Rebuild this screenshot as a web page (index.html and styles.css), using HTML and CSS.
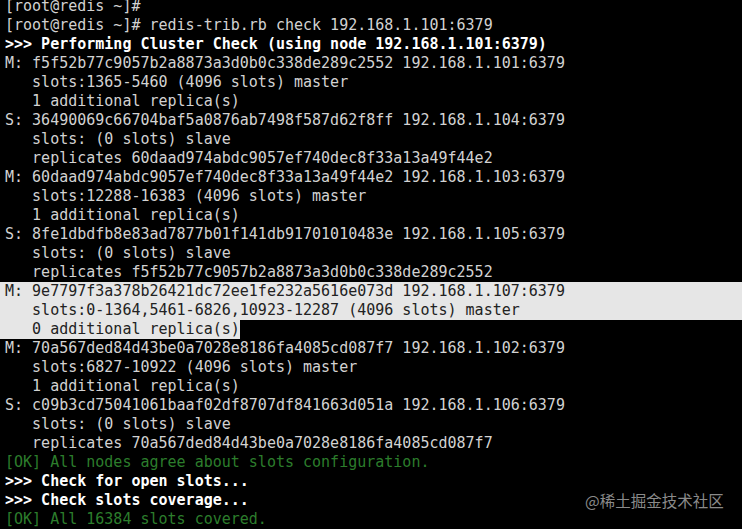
FILE: index.html
```html
<!DOCTYPE html>
<html>
<head>
<meta charset="utf-8">
<link rel="stylesheet" href="styles.css">
</head>
<body>
<div class="term">
<div class="line">[root@redis ~]#</div>
<div class="line">[root@redis ~]# redis-trib.rb check 192.168.1.101:6379</div>
<div class="line b">&gt;&gt;&gt; Performing Cluster Check (using node 192.168.1.101:6379)</div>
<div class="line">M: f5f52b77c9057b2a8873a3d0b0c338de289c2552 192.168.1.101:6379</div>
<div class="line">   slots:1365-5460 (4096 slots) master</div>
<div class="line">   1 additional replica(s)</div>
<div class="line">S: 36490069c66704baf5a0876ab7498f587d62f8ff 192.168.1.104:6379</div>
<div class="line">   slots: (0 slots) slave</div>
<div class="line">   replicates 60daad974abdc9057ef740dec8f33a13a49f44e2</div>
<div class="line">M: 60daad974abdc9057ef740dec8f33a13a49f44e2 192.168.1.103:6379</div>
<div class="line">   slots:12288-16383 (4096 slots) master</div>
<div class="line">   1 additional replica(s)</div>
<div class="line">S: 8fe1dbdfb8e83ad7877b01f141db91701010483e 192.168.1.105:6379</div>
<div class="line">   slots: (0 slots) slave</div>
<div class="line">   replicates f5f52b77c9057b2a8873a3d0b0c338de289c2552</div>
<div class="line hl">M: 9e7797f3a378b26421dc72ee1fe232a5616e073d 192.168.1.107:6379</div>
<div class="line hl">   slots:0-1364,5461-6826,10923-12287 (4096 slots) master</div>
<div class="line hl part">   0 additional replica(s)</div>
<div class="line">M: 70a567ded84d43be0a7028e8186fa4085cd087f7 192.168.1.102:6379</div>
<div class="line">   slots:6827-10922 (4096 slots) master</div>
<div class="line">   1 additional replica(s)</div>
<div class="line">S: c09b3cd75041061baaf02df8707df841663d051a 192.168.1.106:6379</div>
<div class="line">   slots: (0 slots) slave</div>
<div class="line">   replicates 70a567ded84d43be0a7028e8186fa4085cd087f7</div>
<div class="line ok">[OK] All nodes agree about slots configuration.</div>
<div class="line b">&gt;&gt;&gt; Check for open slots...</div>
<div class="line b">&gt;&gt;&gt; Check slots coverage...</div>
<div class="line ok">[OK] All 16384 slots covered.</div>
</div>
<div class="watermark">@稀土掘金技术社区</div>
</body>
</html>
```
FILE: styles.css
```css
html, body {
  margin: 0;
  padding: 0;
  background: #000;
  overflow: hidden;
  height: 529px;
}
.term {
  margin-top: -3px;
  font-family: "DejaVu Sans Mono", monospace;
  font-size: 15px;
  line-height: 19px;
  color: #d2d2d2;
}
.line {
  height: 19px;
  padding-left: 5px;
  white-space: pre;
}
.b {
  color: #ffffff;
  font-weight: bold;
}
.ok {
  color: #2c7d2c;
}
.hl {
  background: #e6e6e6;
  color: #222222;
}
.part {
  width: fit-content;
}
.watermark {
  position: absolute;
  left: 585px;
  top: 489px;
  font-family: "Noto Sans CJK SC", sans-serif;
  font-size: 15.5px;
  line-height: 22px;
  color: #8a8a8a;
}
```
